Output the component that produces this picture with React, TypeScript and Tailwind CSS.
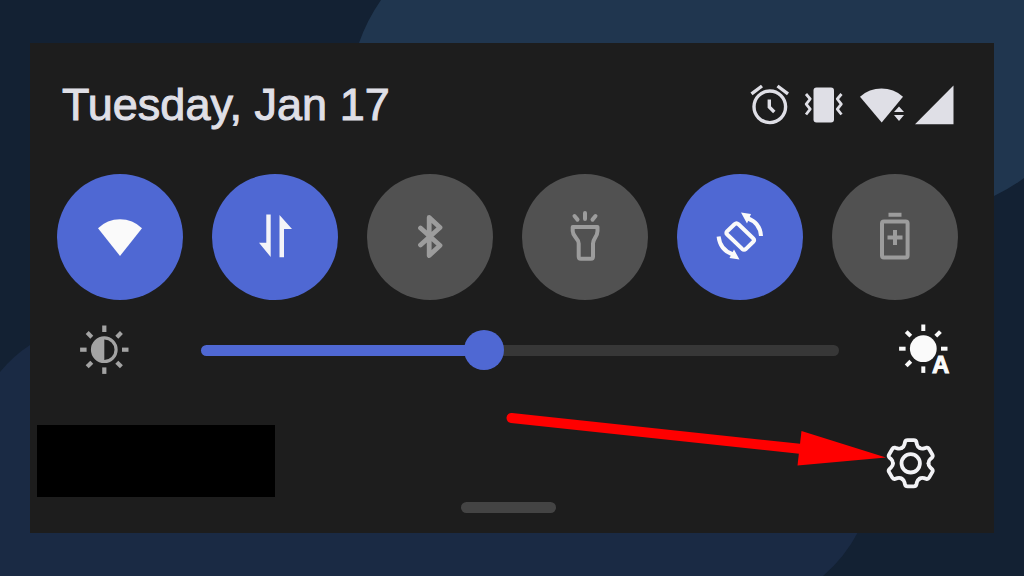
import React, { useState } from 'react';

const RAY_ANGLES = [0, 45, 90, 135, 180, 225, 270, 315];

const FanIcon = () => (
    <svg viewBox="0 0 56 56" className="size-14" fill="#fafafa" aria-hidden="true">
        <path d="M6 19.3A31 31 0 0 1 50 19.3L28 47Z" />
    </svg>
);

const DataIcon = () => (
    <svg viewBox="0 0 56 56" className="size-14" fill="#f4f4f8" aria-hidden="true">
        <path d="M19.3 5.5h4.4V48L12 33.7h7.3Z" />
        <path d="M32.5 6L45 20h-8v28.3h-4.5Z" />
    </svg>
);

const BluetoothIcon = () => (
    <svg viewBox="0 0 56 56" className="size-14" fill="none" stroke="#9c9c9c" strokeWidth="4.8" strokeLinejoin="round" strokeLinecap="round" aria-hidden="true">
        <path d="M18.5 19L38 36.5L27.2 46.5V8.500L38 18.5L18.500 36" />
    </svg>
);

const FlashlightIcon = () => (
    <svg viewBox="0 0 56 56" className="size-14" fill="none" stroke="#9c9c9c" strokeWidth="4" strokeLinejoin="round" aria-hidden="true">
        <path d="M15.7 18H40.5V22C40.5 28 36 29 36 34.5V47.5Q36 49.7 34 49.7H23.7Q21.7 49.7 21.7 47.5V34.5C21.7 29 15.7 28 15.7 22Z" />
        <path d="M28 4v6M17.500 7l3 3.6M38.500 7l-3 3.6" strokeLinecap="round" />
    </svg>
);

const RotateIcon = () => (
    <svg viewBox="0 0 56 56" className="size-14" fill="none" stroke="#fafafa" strokeWidth="4" strokeLinejoin="round" aria-hidden="true">
        <path d="M22.5 15.3Q24.5 13.500 26.5 15.300L41.300 29.5Q43 31.200 41.300 32.8L34 39.9Q32 41.500 30.200 39.9L15.200 25.5Q13.500 24 15.200 22.200Z" />
        <path d="M35 9C43.5 12 48.5 18.5 49 27" />
        <path d="M6.600 27.500C7.500 36 12.500 42.500 21 45.500" />
        <path d="M29 3.500l10 1.500l-4 9.500Z M27.500 50.500l-10-1.500l4.500-8.500Z" fill="#fafafa" stroke="none" />
    </svg>
);

const BatteryIcon = () => (
    <svg viewBox="0 0 56 56" className="size-14" fill="none" stroke="#9c9c9c" strokeWidth="4" aria-hidden="true">
        <rect x="15" y="12.5" width="25.6" height="36" rx="2" />
        <path d="M21.500 5.700h13M28 21v15M20.500 28.500h15" />
    </svg>
);

const tiles = [
    { label: 'Wi-Fi', icon: FanIcon, active: true },
    { label: 'Mobile data', icon: DataIcon, active: true },
    { label: 'Bluetooth', icon: BluetoothIcon, active: false },
    { label: 'Flashlight', icon: FlashlightIcon, active: false },
    { label: 'Auto-rotate', icon: RotateIcon, active: true },
    { label: 'Battery saver', icon: BatteryIcon, active: false },
];

const StatusIcons = () => (
    <div className="flex items-center gap-[11px]">
        {/* Alarm */}
        <svg viewBox="0 0 40 42" className="h-[42px] w-10" fill="none" stroke="#dfdfe6" strokeWidth="3.4" aria-hidden="true">
            <circle cx="20.8" cy="22.8" r="15.8" />
            <path d="M2.5 9.8L13 2M28.5 2L39 9.8" />
            <path d="M20.3 15.5V23L25.3 28" />
        </svg>
        {/* Vibrate */}
        <svg viewBox="0 0 40 42" className="h-[42px] w-10 overflow-visible" fill="none" stroke="#dfdfe6" strokeWidth="2.8" strokeLinejoin="round" aria-hidden="true">
            <rect x="13.5" y="3.5" width="20.5" height="35" rx="3" fill="#dfdfe6" stroke="none" />
            <path d="M6 10l4.2 5l-4 5.2l4 5l-4.2 5.3" />
            <path d="M41.5 10l-4.2 5l4 5.2l-4 5l4.2 5.3" />
        </svg>
        {/* Wi-Fi signal */}
        <svg viewBox="0 0 52 42" className="h-[42px] w-[52px] overflow-visible" fill="#dfdfe6" aria-hidden="true">
            <path d="M9 12.7A32 32 0 0 1 52 12.7L30.7 38.5Z" />
            <path d="M43 28h10l-5-5.5ZM43 31h10l-5 6Z" stroke="#1d1d1d" strokeWidth="3" paintOrder="stroke" />
        </svg>
        {/* Mobile signal */}
        <svg viewBox="0 0 40 42" className="h-[42px] w-10" fill="#dfdfe6" aria-hidden="true">
            <path d="M1 40.3H39.5V1.5Z" />
        </svg>
    </div>
);

const BrightnessLowIcon = () => (
    <svg viewBox="0 0 56 56" className="size-14 shrink-0" fill="none" stroke="#a3a3a3" aria-hidden="true">
        <circle cx="27.3" cy="27.7" r="11.8" strokeWidth="3.2" />
        <path d="M27.3 15.5A12.2 12.2 0 0 0 27.3 39.9Z" fill="#a3a3a3" stroke="none" />
        {RAY_ANGLES.map((angle) => (
            <path key={angle} d="M27.3 3.5v6.5" strokeWidth="4.2" transform={`rotate(${angle} 27.3 27.7)`} />
        ))}
    </svg>
);

const BrightnessAutoIcon = () => (
    <svg viewBox="0 0 56 56" className="size-14" fill="#fafafa" aria-hidden="true">
        <circle cx="27.3" cy="26.7" r="13.4" />
        {RAY_ANGLES.filter((angle) => angle !== 135).map((angle) => (
            <path key={angle} d="M27.3 2.5v6.500" stroke="#fafafa" strokeWidth="4" transform={`rotate(${angle} 27.3 26.7)`} />
        ))}
        <text
            x="36"
            y="51"
            className="font-['Liberation_Sans',sans-serif] text-[24px] font-bold"
            stroke="#fafafa"
            strokeWidth="1"
        >
            A
        </text>
    </svg>
);

const GearIcon = () => (
    <svg viewBox="0 0 56 56" className="size-14" fill="none" stroke="#f2f2f5" strokeWidth="3.8" strokeLinecap="round" aria-hidden="true">
        <g transform="translate(27.7 30.3)">
            <circle r="9.2" />
            {[0, 60, 120, 180, 240, 300].map((angle) => (
                <path
                    key={angle}
                    d="M-8.9-15.4Q-6.8-16.5-6.2-19L-5.7-21.3Q-5.2-23.1-3.2-23.1H3.2Q5.2-23.1 5.7-21.3L6.2-19Q6.8-16.5 8.9-15.4"
                    transform={`rotate(${angle})`}
                />
            ))}
        </g>
    </svg>
);

const App: React.FC = () => {
    const [active, setActive] = useState(tiles.map((tile) => tile.active));
    const [brightness, setBrightness] = useState(44);

    const toggle = (index: number) => {
        setActive(active.map((value, i) => (i === index ? !value : value)));
    };

    return (
        <div className="relative min-h-screen overflow-hidden bg-[#132133] px-[30px] py-[43px] font-['Liberation_Sans',Arial,sans-serif]">
            {/* Backdrop shapes */}
            <svg viewBox="0 0 1024 576" preserveAspectRatio="none" className="absolute inset-0 size-full" aria-hidden="true">
                <path d="M381 0Q367 20 359 43C330 190 800 290 994 196Q1011 188 1024 178V0Z" fill="#20364f" />
                <path d="M0 372Q13 356 30 345C300 150 900 300 858 532Q845 557 823 576H0Z" fill="#1a2a44" />
            </svg>

            <main className="relative flex flex-col bg-[#1d1d1d] pt-[34px] pb-5">
                <header className="flex items-center justify-between pr-10 pl-8">
                    <h1 className="text-[45px] leading-[56px] whitespace-nowrap text-[#dfdfe6] [-webkit-text-stroke:1px_#dfdfe6]">
                        Tuesday, Jan 17
                    </h1>
                    <StatusIcons />
                </header>

                {/* Quick tiles */}
                <div className="mt-[41px] flex justify-between pr-9 pl-[27px]">
                    {tiles.map((tile, index) => {
                        const Icon = tile.icon;
                        return (
                            <button
                                key={tile.label}
                                type="button"
                                aria-label={tile.label}
                                aria-pressed={active[index]}
                                onClick={() => toggle(index)}
                                className={`flex size-[126px] items-center justify-center rounded-full ${active[index] ? 'bg-[#4f68d3]' : 'bg-[#515151]'
                                    }`}
                            >
                                <Icon />
                            </button>
                        );
                    })}
                </div>

                {/* Brightness */}
                <div className="mt-[22px] flex items-center pr-[42px] pl-[47px]">
                    <BrightnessLowIcon />
                    <input
                        type="range"
                        aria-label="Brightness"
                        min={0}
                        max={100}
                        value={brightness}
                        onChange={(e) => setBrightness(Number(e.target.value))}
                        className="mr-[57px] ml-[68px] h-[11px] min-w-0 flex-1 appearance-none rounded-full [&::-webkit-slider-thumb]:size-10 [&::-webkit-slider-thumb]:appearance-none [&::-webkit-slider-thumb]:rounded-full [&::-webkit-slider-thumb]:bg-[#4f68d3]"
                        style={{ background: `linear-gradient(to right, #4f68d3 ${brightness}%, #373737 ${brightness}%)` }}
                    />
                    <button type="button" aria-label="Automatic brightness">
                        <BrightnessAutoIcon />
                    </button>
                </div>

                <div className="mt-[47px] flex items-center justify-between pr-[55px] pl-[7px]">
                    <div className="h-[72px] w-[238px] bg-black" />
                    <button type="button" aria-label="Settings">
                        <GearIcon />
                    </button>
                </div>

                <div className="mt-[5px] mr-2 h-[11px] w-[95px] self-center rounded-full bg-[#444444]" />

                {/* Arrow pointing at settings */}
                <svg viewBox="0 0 382 58" className="pointer-events-none absolute right-[108px] bottom-[67px] h-[58px] w-[382px]" aria-hidden="true">
                    <path d="M7.5 10L298 41" stroke="#ff0000" strokeWidth="10" strokeLinecap="round" />
                    <path d="M297.5 23L382 49.5L293.5 57.5Z" fill="#ff0000" />
                </svg>
            </main>
        </div>
    );
};

export default App;
